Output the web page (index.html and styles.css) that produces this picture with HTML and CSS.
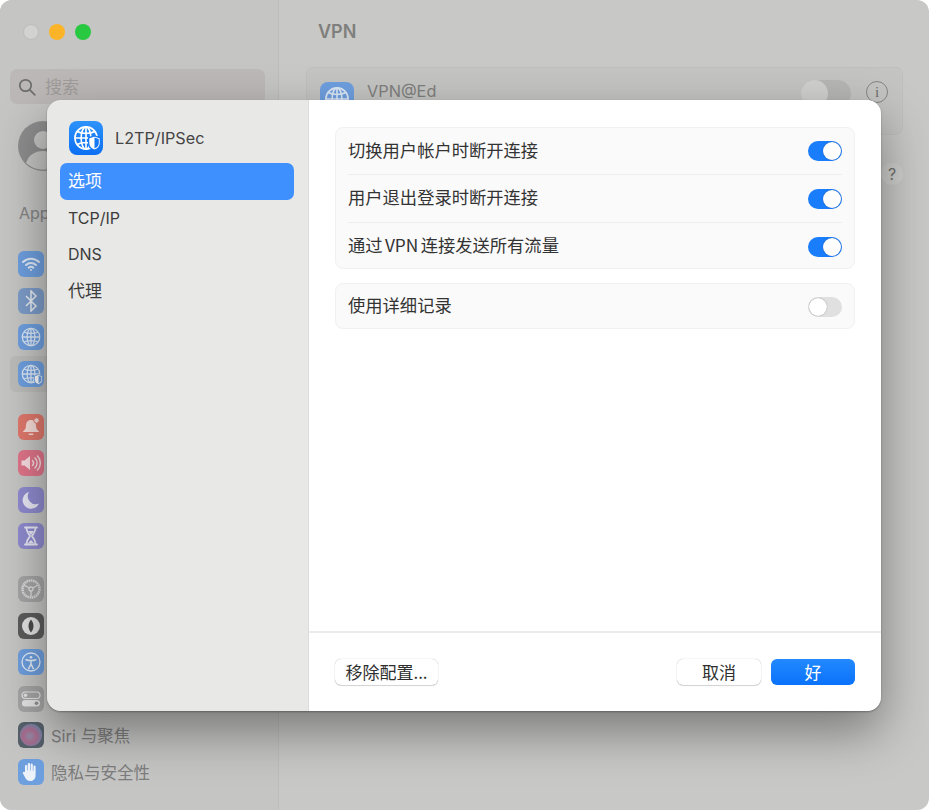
FILE: index.html
```html
<!DOCTYPE html>
<html lang="zh-CN">
<head>
    <meta charset="UTF-8">
    <title>VPN</title>
    <link rel="stylesheet" href="styles.css">
</head>
<body>
    <svg class="defs" width="0" height="0">
        <symbol id="globe" viewBox="0 0 24 24">
            <g fill="none" stroke="currentColor" stroke-width="1.4">
                <circle cx="12" cy="12" r="9.500"/>
                <ellipse cx="12" cy="12" rx="4.200" ry="9.500"/>
                <path d="M12 2.500v19M2.500 12h19M4.400 6.500c4 2.200 11.200 2.200 15.200 0M4.400 17.500c4-2.200 11.200-2.200 15.200 0"/>
            </g>
        </symbol>
        <symbol id="shield" viewBox="0 0 10 12">
            <path d="M5 .5 9.500 2v4c0 3-2 4.700-4.500 5.500C2.500 10.700.5 9 .5 6V2z" fill="#fff" stroke="currentColor" stroke-width="1"/>
            <path d="M5 1.800 8.300 3v3c0 2.200-1.400 3.400-3.300 4.100z" fill="currentColor"/>
        </symbol>
    </svg>

    <div class="window">
        <aside class="sidebar">
            <div class="lights">
                <span class="light gray"></span>
                <span class="light yellow"></span>
                <span class="light green"></span>
            </div>
            <div class="search">
                <svg width="18" height="18" viewBox="0 0 18 18" fill="none" stroke="#6e6e6e" stroke-width="1.700">
                    <circle cx="7.500" cy="7.500" r="5.700"/>
                    <path d="m11.800 11.800 5 5" stroke-linecap="round"/>
                </svg>
                <span class="search-text">搜索</span>
            </div>
            <div class="avatar">
                <svg width="50" height="50" viewBox="0 0 50 50">
                    <circle cx="25" cy="25" r="25" fill="#8d8d8d"/>
                    <circle cx="25" cy="19" r="9" fill="#c4c4c2"/>
                    <path d="M8 42c3-9 10-12 17-12s14 3 17 12a25 25 0 0 1-34 0z" fill="#c4c4c2"/>
                </svg>
            </div>
            <div class="apple-id">App</div>

            <div class="nav-group">
                <div class="nav-row"><span class="app-icon blue">
                    <svg width="20" height="20" viewBox="0 0 20 20" fill="none" stroke="#dfe9f6" stroke-width="2" stroke-linecap="round">
                        <path d="M2 8a11.500 11.500 0 0 1 16 0M5 11a7 7 0 0 1 10 0M7.700 13.700a3.200 3.200 0 0 1 4.600 0"/>
                        <circle cx="10" cy="16" r="1" fill="#dfe9f6" stroke="none"/>
                    </svg>
                </span></div>
                <div class="nav-row"><span class="app-icon steel">
                    <svg width="16" height="22" viewBox="0 0 16 22" fill="none" stroke="#e6ebf2" stroke-width="1.500">
                        <path d="m3 6 10 10-5 5V1l5 5L3 16"/>
                    </svg>
                </span></div>
                <div class="nav-row"><span class="app-icon blue">
                    <svg width="22" height="22"><use href="#globe"/></svg>
                </span></div>
                <div class="nav-row current"><span class="app-icon blue">
                    <svg width="22" height="22"><use href="#globe"/></svg>
                    <svg class="shield-small" width="9" height="11"><use href="#shield"/></svg>
                </span></div>
            </div>

            <div class="nav-group">
                <div class="nav-row"><span class="app-icon red">
                    <svg width="20" height="20" viewBox="0 0 20 20" fill="#f6dcd8">
                        <path d="M10 3c-3.500 0-5 2.500-5 5.500 0 3-1 4.500-3 6v.500h16v-.500c-2-1.500-3-3-3-6C15 5.500 13.500 3 10 3z"/>
                        <rect x="7.500" y="16.500" width="5" height="1.500" rx=".7"/>
                        <circle cx="15.500" cy="3.500" r="2.700" stroke="#e0786c"/>
                    </svg>
                </span></div>
                <div class="nav-row"><span class="app-icon pink">
                    <svg width="22" height="20" viewBox="0 0 22 20" fill="none" stroke="#f8dde2" stroke-width="1.500" stroke-linecap="round">
                        <path d="M1.500 7.500h3L10 3v14l-5.500-4.500h-3z" fill="#f8dde2" stroke="none"/>
                        <path d="M12.500 7.500a3.500 3.500 0 0 1 0 5M15 5a7 7 0 0 1 0 10M17.500 3a10 10 0 0 1 0 14"/>
                    </svg>
                </span></div>
                <div class="nav-row"><span class="app-icon purple">
                    <svg width="20" height="20" viewBox="0 0 20 20"><path d="M8 2a8.500 8.500 0 1 0 10 11.500A8 8 0 0 1 8 2z" fill="#e8e7f5"/></svg>
                </span></div>
                <div class="nav-row"><span class="app-icon purple">
                    <svg width="16" height="20" viewBox="0 0 16 20" fill="none" stroke="#e8e7f5" stroke-width="1.800" stroke-linecap="round">
                        <path d="M2 1.500h12M2 18.500h12M3.500 2c0 5 3 6 3.500 8-.5 2-3.500 3-3.500 8M12.500 2c0 5-3 6-3.500 8 .5 2 3.500 3 3.500 8"/>
                        <path d="M4.500 17.500 8 14l3.500 3.500zM5 5h6l-3 4z" fill="#e8e7f5" stroke="none"/>
                    </svg>
                </span></div>
            </div>

            <div class="nav-group">
                <div class="nav-row"><span class="app-icon gray">
                    <svg width="22" height="22" viewBox="0 0 22 22" fill="none" stroke="#dcdcdc">
                        <circle cx="11" cy="11" r="8.500" stroke-width="2.500" stroke-dasharray="1.600 .6"/>
                        <path d="M11 11 4 7M11 11l7-4M11 11v8" stroke-width="1.300"/>
                        <circle cx="11" cy="11" r="2" fill="#a5a5a5" stroke-width="1.300"/>
                    </svg>
                </span></div>
                <div class="nav-row"><span class="app-icon dark">
                    <svg width="22" height="22" viewBox="0 0 22 22">
                        <circle cx="11" cy="11" r="9" fill="#e2e2e2"/>
                        <path d="M11 4.500c-1.500 2-2.500 4-2.500 6.500s1 4.500 2.500 6.500c1.500-2 2.500-4 2.500-6.500S12.500 6.500 11 4.500z" fill="#4a4a4a"/>
                    </svg>
                </span></div>
                <div class="nav-row"><span class="app-icon blue">
                    <svg width="22" height="22" viewBox="0 0 22 22" fill="none" stroke="#e4edf8" stroke-width="1.300">
                        <circle cx="11" cy="11" r="9"/>
                        <circle cx="11" cy="6.300" r="1.300" fill="#e4edf8" stroke="none"/>
                        <path d="M6 8.700c3 1 7 1 10 0M11 9.500v3.500M11 13l-2.300 4.700M11 13l2.300 4.700" stroke-width="1.500" stroke-linecap="round"/>
                    </svg>
                </span></div>
                <div class="nav-row"><span class="app-icon gray">
                    <svg width="20" height="20" viewBox="0 0 20 20">
                        <rect x="1" y="3" width="18" height="6.500" rx="3.200" fill="none" stroke="#e4e4e4" stroke-width="1.200"/>
                        <circle cx="4.500" cy="6.200" r="1.800" fill="#e4e4e4"/>
                        <rect x="1" y="11" width="18" height="6.500" rx="3.200" fill="#e4e4e4"/>
                        <circle cx="15.500" cy="14.200" r="1.800" fill="#8f8f8f"/>
                    </svg>
                </span></div>
                <div class="nav-row"><span class="app-icon siri"><span class="siri-orb"></span></span><span class="nav-label">Siri 与聚焦</span></div>
                <div class="nav-row"><span class="app-icon blue">
                    <svg width="20" height="22" viewBox="0 0 20 22" fill="#eef3fa">
                        <path d="M4 11V5a1 1 0 0 1 2.200 0v4.500h.6V3a1.100 1.100 0 0 1 2.200 0v6.500h.6V3.700a1.100 1.100 0 0 1 2.200 0v6h.6V5.500a1.100 1.100 0 0 1 2.200 0V14c0 4-2.500 6-5.500 6-2.500 0-3.800-1.300-5-3.500L2 12.500c-.8-1.400 1-2.500 2-1.300z"/>
                    </svg>
                </span><span class="nav-label">隐私与安全性</span></div>
            </div>
        </aside>

        <main class="pane">
            <h1 class="pane-title">VPN</h1>
            <div class="vpn-card">
                <span class="app-icon blue large">
                    <svg width="28" height="28"><use href="#globe"/></svg>
                </span>
                <span class="vpn-name">VPN@Ed</span>
                <span class="vpn-toggle"></span>
                <span class="info">i</span>
            </div>
            <div class="help-row"><span class="help">?</span></div>
        </main>
    </div>

    <section class="sheet">
        <div class="sheet-side">
            <div class="sheet-head">
                <span class="head-icon">
                    <svg width="28" height="28"><use href="#globe"/></svg>
                    <svg class="head-shield" width="13" height="16"><use href="#shield"/></svg>
                </span>
                <span>L2TP/IPSec</span>
            </div>
            <div class="tab selected">选项</div>
            <div class="tab latin">TCP/IP</div>
            <div class="tab latin">DNS</div>
            <div class="tab">代理</div>
        </div>
        <div class="sheet-main">
            <div class="options">
                <div class="group">
                    <div class="row">
                        <span class="row-text">切换用户帐户时断开连接</span>
                        <span class="switch on"></span>
                    </div>
                    <div class="row">
                        <span class="row-text">用户退出登录时断开连接</span>
                        <span class="switch on"></span>
                    </div>
                    <div class="row">
                        <span class="row-text vpn-text">通过 VPN 连接发送所有流量</span>
                        <span class="switch on"></span>
                    </div>
                </div>
                <div class="group">
                    <div class="row">
                        <span class="row-text">使用详细记录</span>
                        <span class="switch"></span>
                    </div>
                </div>
            </div>
            <div class="footer">
                <button class="btn remove">移除配置...</button>
                <div class="footer-right">
                    <button class="btn wide">取消</button>
                    <button class="btn wide primary">好</button>
                </div>
            </div>
        </div>
    </section>
</body>
</html>
```

FILE: styles.css
```css
* {
    box-sizing: border-box;
}
html, body {
    height: 100%;
}
body {
    margin: 0;
    background: #fff;
    font-family: Inter, "Noto Sans CJK SC", sans-serif;
    overflow: hidden;
}
.defs {
    position: absolute;
}
.window {
    display: flex;
    height: 810px;
    border-radius: 12px;
    overflow: hidden;
    background: #c8c8c6;
}
.sidebar {
    width: 279px;
    flex-shrink: 0;
    padding: 24px 13px 0 10px;
    background: #c5c5c4;
    border-right: 1px solid #bdbdbb;
}
.lights {
    display: flex;
    gap: 10px;
    padding-left: 13px;
}
.light {
    width: 16px;
    height: 16px;
    border-radius: 50%;
}
.light.gray {
    background: #d2d2d1;
    border: 1px solid #bcbcbb;
}
.light.yellow {
    background: #fbb428;
}
.light.green {
    background: #28c840;
}
.search {
    display: flex;
    align-items: center;
    gap: 9px;
    height: 35px;
    margin-top: 29px;
    padding-left: 8px;
    background: #bcb8b7;
    border-radius: 7px;
    color: #9f9c9b;
    font-family: "Noto Sans CJK SC", sans-serif;
    font-size: 17px;
}
.search-text {
    padding-bottom: 3px;
}
.avatar {
    height: 50px;
    margin: 17px 0 0 8px;
}
.apple-id {
    margin: 31px 0 0 9px;
    font-size: 16px;
    line-height: 22px;
    color: #848484;
}
.nav-group {
    margin-top: 16.5px;
}
.apple-id + .nav-group {
    margin-top: 22px;
}
.nav-row {
    display: flex;
    align-items: center;
    gap: 7px;
    height: 36.5px;
    padding-left: 8px;
    border-radius: 6px;
}
.nav-row.current {
    background: #bcbcba;
}
.nav-label {
    font-size: 16.5px;
    color: #7d7d7d;
}
.app-icon {
    position: relative;
    display: flex;
    align-items: center;
    justify-content: center;
    width: 26px;
    height: 26px;
    border-radius: 6px;
    flex-shrink: 0;
}
.app-icon.large {
    width: 34px;
    height: 34px;
    margin-top: 1px;
    border-radius: 8px;
}
.app-icon.blue {
    background: #6e9fdf;
    color: #dce8f7;
}
.app-icon.steel {
    background: #7d9cc9;
}
.app-icon.red {
    background: #e0786c;
}
.app-icon.pink {
    background: #e0758a;
}
.app-icon.purple {
    background: #8f8bcf;
}
.app-icon.gray {
    background: #a5a5a5;
}
.app-icon.dark {
    background: #5c5c5c;
}
.app-icon.siri {
    background: #56606a;
}
.siri-orb {
    width: 22px;
    height: 22px;
    border-radius: 50%;
    background: radial-gradient(circle at 45% 55%, #8f8ca6 0%, #a86a8c 40%, #6f86a8 75%, #5c7a80 100%);
}
.shield-small {
    position: absolute;
    right: 1px;
    bottom: 2px;
    color: #6e9fdf;
}
.pane {
    flex: 1;
    padding: 0 26px 0 27px;
}
.pane-title {
    margin: 0 0 0 12px;
    padding-top: 20px;
    font-size: 18px;
    line-height: 24px;
    font-weight: 600;
    color: #7f7f7d;
}
.vpn-card {
    display: flex;
    gap: 13px;
    height: 68px;
    margin-top: 23px;
    padding: 13px 14px 0 13px;
    background: #c4c4c2;
    border: 1px solid #bfbfbd;
    border-radius: 7px;
}
.vpn-name {
    font-size: 16.300px;
    line-height: 20px;
    color: #7f7f7d;
}
.vpn-toggle {
    position: relative;
    width: 50px;
    height: 27px;
    margin-left: auto;
    margin-top: -1px;
    border-radius: 14px;
    background: #b6b6b4;
}
.vpn-toggle::after {
    content: "";
    position: absolute;
    left: 0;
    top: 0;
    width: 27px;
    height: 27px;
    border-radius: 50%;
    background: #d0d0ce;
}
.info {
    width: 22px;
    height: 22px;
    margin-left: 2px;
    border: 1px solid #858583;
    border-radius: 50%;
    text-align: center;
    font: 15px/20px "Liberation Serif", serif;
    color: #6f6f6d;
}
.help-row {
    display: flex;
    justify-content: flex-end;
    margin-top: 28px;
}
.help {
    width: 22px;
    height: 22px;
    border-radius: 50%;
    background: #cfcfcd;
    text-align: center;
    font-size: 16px;
    line-height: 22px;
    color: #6f6f6d;
}

/* sheet above the window */
.sheet {
    position: absolute;
    left: 47px;
    top: 100px;
    display: flex;
    width: 834px;
    height: 611px;
    border-radius: 14px;
    overflow: hidden;
    box-shadow: 0 1px 2px rgba(0, 0, 0, 0.3), 0 20px 50px rgba(0, 0, 0, 0.4);
    font-size: 17.300px;
    color: #333;
}
.sheet-side {
    width: 262px;
    padding: 21px 14px 0 13px;
    background: #e8e8e6;
    border-right: 1px solid #dcdcda;
}
.sheet-head {
    display: flex;
    align-items: center;
    gap: 12px;
    height: 34px;
    margin: 0 0 8px 9px;
    font-size: 16.200px;
    color: #444;
}
.head-icon {
    position: relative;
    display: flex;
    align-items: center;
    justify-content: center;
    width: 34px;
    height: 34px;
    border-radius: 8px;
    background: linear-gradient(#2e93fb, #0b6ff2);
    color: #fff;
}
.head-shield {
    position: absolute;
    right: 2px;
    bottom: 4px;
    color: #1578f5;
}
.tab {
    height: 36.500px;
    padding-left: 8px;
    border-radius: 7px;
    line-height: 36px;
    font-size: 17px;
    color: #3c3c3c;
}
.tab.latin {
    font-size: 16px;
}
.tab.selected {
    background: #3e90ff;
    color: #fff;
}
.sheet-main {
    flex: 1;
    display: flex;
    flex-direction: column;
    background: #fff;
}
.options {
    flex: 1;
    display: flex;
    flex-direction: column;
    gap: 14px;
    padding: 27px 26px 0;
    font-family: "Noto Sans CJK SC", sans-serif;
}
.group {
    padding: 0 12px;
    background: #fafafa;
    border: 1px solid #f1f1f1;
    border-radius: 8px;
}
.row {
    display: flex;
    align-items: center;
    justify-content: space-between;
    height: 48px;
    border-top: 1px solid #eeeeee;
}
.row-text {
    padding-bottom: 4px;
}
.vpn-text {
    word-spacing: -1.500px;
}
.group .row:first-child {
    height: 46px;
    border-top: none;
}
.group .row:last-child {
    height: 46px;
    padding-top: 2px;
}
.group .row:first-child:last-child {
    height: 44px;
    padding-top: 1px;
}
.switch {
    position: relative;
    width: 34px;
    height: 20px;
    border-radius: 10px;
    background: #e0e0e0;
}
.switch::after {
    content: "";
    position: absolute;
    top: 1px;
    left: 1px;
    width: 18px;
    height: 18px;
    border-radius: 50%;
    background: #fff;
    box-shadow: 0 0 1px rgba(0, 0, 0, 0.5);
}
.switch.on {
    background: #1a7dfb;
}
.switch.on::after {
    left: 15px;
}
.footer {
    display: flex;
    justify-content: space-between;
    height: 80px;
    padding: 26px 26px 0;
    border-top: 2px solid #ececec;
}
.footer-right {
    display: flex;
    gap: 10px;
}
.btn {
    height: 26px;
    padding: 0 0 2px;
    border: none;
    border-radius: 6px;
    background: #fff;
    box-shadow: 0 0 1px rgba(0, 0, 0, 0.35), 0 1px 1px rgba(0, 0, 0, 0.15);
    font-family: "Noto Sans CJK SC", sans-serif;
    font-size: 17px;
    color: #2e2e2e;
}
.btn.remove {
    width: 103px;
}
.btn.wide {
    width: 84px;
}
.btn.primary {
    background: linear-gradient(#2389fe, #0a72fb);
    box-shadow: none;
    color: #fff;
}
```
